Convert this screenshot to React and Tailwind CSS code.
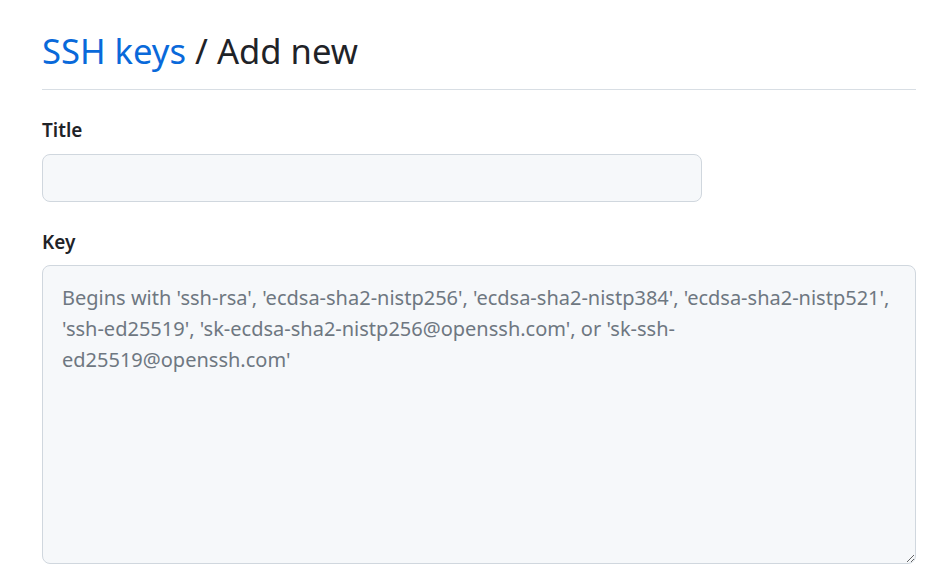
import React from "react";

export default function App() {
  return (
    <div className="min-h-screen bg-white pl-[42px] pr-[21px] pt-[27px] text-[#1f2328] font-['Noto_Sans',sans-serif]">
      {/* Header */}
      <div className="border-b border-[#d8dee4] pb-[14px]">
        <h1 className="text-[34.6px] leading-[48px] font-normal">
          <a href="#" className="text-[#0969da]">SSH keys</a> / Add new
        </h1>
      </div>

      <form className="pt-[28px]">
        <label className="block text-[19px] leading-[24px] font-semibold mb-[12px]">Title</label>
        <input
          type="text"
          className="block w-[660px] h-[48px] rounded-[8px] border border-[#d0d7de] bg-[#f6f8fa] px-[16px] text-[19px] outline-none"
        />

        <label className="block text-[19px] leading-[24px] font-semibold mt-[28px] mb-[11px]">Key</label>
        <textarea
          placeholder="Begins with 'ssh-rsa', 'ecdsa-sha2-nistp256', 'ecdsa-sha2-nistp384', 'ecdsa-sha2-nistp521', 'ssh-ed25519', 'sk-ecdsa-sha2-nistp256@openssh.com', or 'sk-ssh-ed25519@openssh.com'"
          className="block w-full h-[299px] rounded-[8px] border border-[#d0d7de] bg-[#f6f8fa] px-[19px] pt-[16px] pb-[15px] text-[20px] leading-[31px] placeholder:text-[#6e7781] outline-none"
        />
      </form>
    </div>
  );
}
